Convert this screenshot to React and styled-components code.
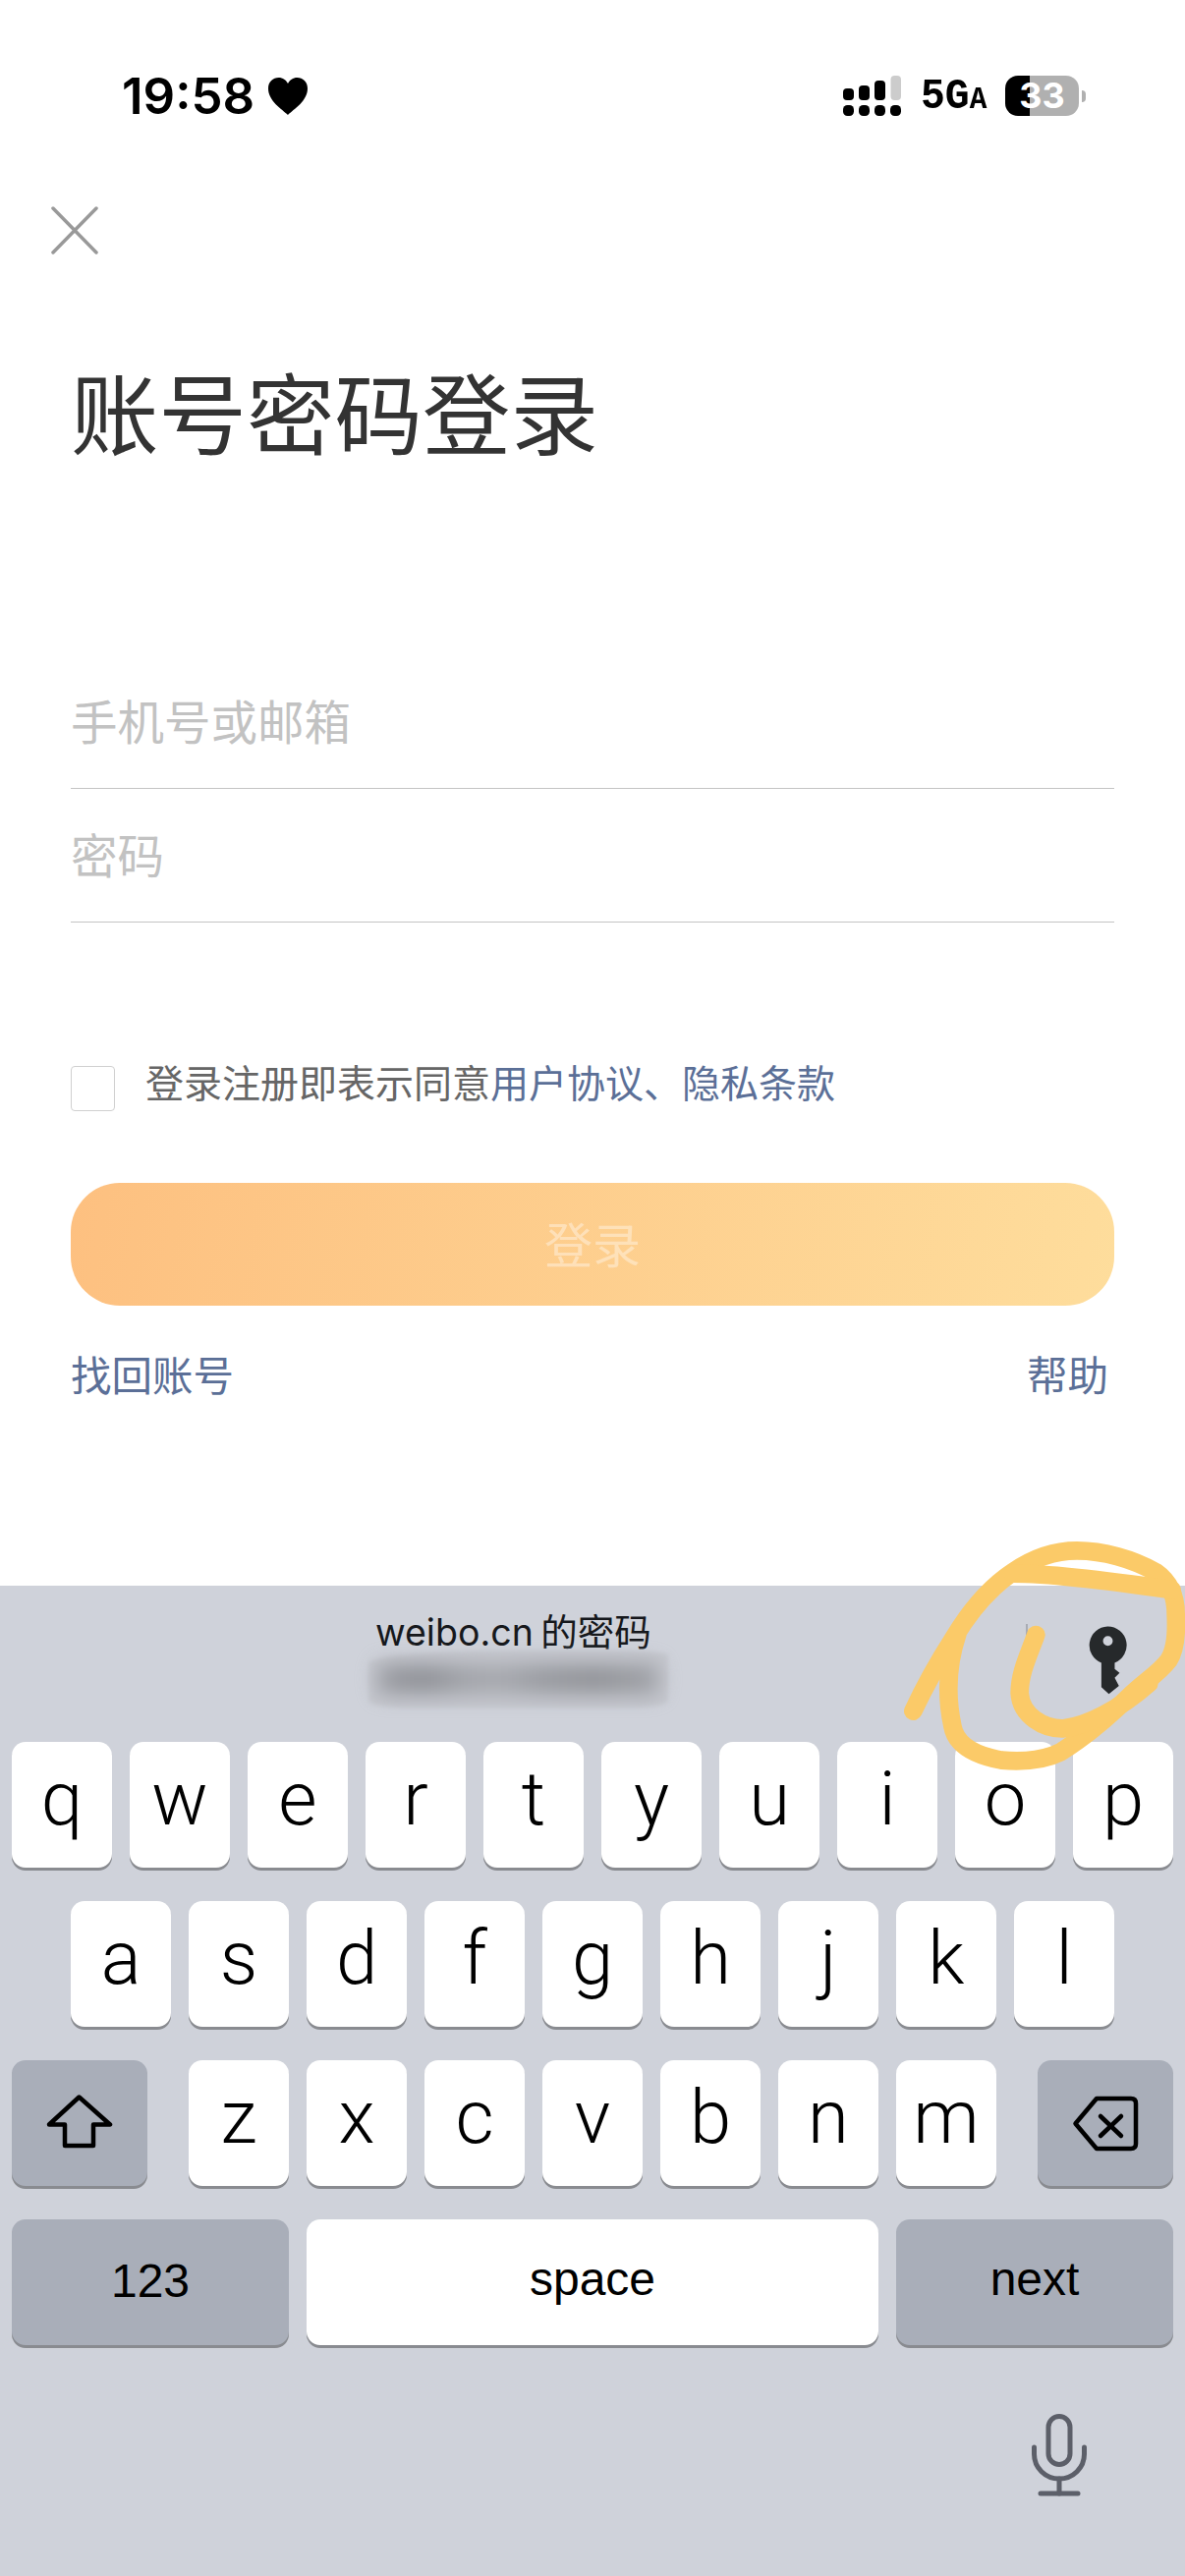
import React from "react";
import styled, { createGlobalStyle } from "styled-components";

const GlobalStyle = createGlobalStyle`
  html, body {
    margin: 0;
    padding: 0;
    background: #fff;
  }
  * {
    box-sizing: border-box;
  }
`;

const CJK = `Inter, "Noto Sans CJK SC", sans-serif`;
const KEY_FONT = `Roboto, "Liberation Sans", sans-serif`;
const LABEL_FONT = `"Liberation Sans", Arial, sans-serif`;

const Page = styled.div`
  position: relative;
  width: 1206px;
  height: 2622px;
  overflow: hidden;
  display: flex;
  flex-direction: column;
  background: #fff;
  font-family: ${CJK};
`;

/* status bar */
const StatusBar = styled.div`
  display: flex;
  justify-content: space-between;
  align-items: center;
  height: 41px;
  margin-top: 77px;
  padding: 0 101px 0 124px;
`;

const Clock = styled.div`
  display: flex;
  align-items: center;
  gap: 14px;
  font-size: 51px;
  font-weight: 600;
  line-height: 41px;
  color: #000;
`;

const StatusRight = styled.div`
  display: flex;
  align-items: center;
`;

const NetworkLabel = styled.div`
  margin-left: 20px;
  width: 86px;
  padding-top: 5px;
  font-family: "Liberation Mono", monospace;
  font-size: 45px;
  font-weight: 700;
  line-height: 41px;
  white-space: nowrap;
  color: #000;
  transform: scaleX(0.92);
  transform-origin: left center;

  small {
    font-size: 32px;
  }
`;

const Battery = styled.div`
  width: 75px;
  height: 41px;
  border-radius: 13px;
  display: flex;
  align-items: center;
  justify-content: center;
  background: linear-gradient(90deg, #000 33%, #b0b0b0 33%);
  color: #fff;
  font-size: 36px;
  font-weight: 700;
  line-height: 41px;
`;

const BatteryCap = styled.div`
  width: 4px;
  height: 12px;
  margin-left: 3px;
  border-radius: 0 6px 6px 0;
  background: #b0b0b0;
`;

/* login form */
const CloseButton = styled.button`
  width: 48px;
  height: 49px;
  margin: 92px 0 0 52px;
  padding: 0;
  border: 0;
  background: none;
  display: block;
`;

const Form = styled.div`
  padding: 0 72px;
`;

const Title = styled.h1`
  margin: 120px 0 198px;
  font-size: 89.500px;
  font-weight: 400;
  line-height: 90px;
  color: #333;
`;

const Field = styled.div`
  display: flex;
  align-items: center;
  height: 136px;
  padding-bottom: 4px;
  border-bottom: 1.5px solid #c4c4c4;
  font-size: 47.500px;
  color: #c2c2c2;
`;

const Agreement = styled.div`
  display: flex;
  align-items: flex-start;
  gap: 31px;
  margin-top: 142px;
  font-size: 39px;
  line-height: 44px;
  color: #666;
`;

const Checkbox = styled.div`
  width: 45px;
  height: 46px;
  margin-top: 4px;
  border: 1.5px solid #d0d0d0;
  border-radius: 4px;
`;

const LinkText = styled.span`
  color: #5b6f97;
`;

const LoginButton = styled.button`
  display: flex;
  align-items: center;
  justify-content: center;
  width: 100%;
  height: 125px;
  margin-top: 73px;
  padding: 0 0 4px;
  border: 0;
  border-radius: 50px;
  background: linear-gradient(100deg, #fdc080, #fedd9c);
  font-family: ${CJK};
  font-size: 49px;
  color: rgba(255, 255, 255, 0.38);
`;

const FooterLinks = styled.div`
  display: flex;
  justify-content: space-between;
  margin-top: 47px;
  padding-right: 6px;
  font-size: 41.500px;
  line-height: 50px;
  color: #5b6f97;
`;

/* keyboard */
const Keyboard = styled.div`
  margin-top: auto;
  height: 1008px;
  background: #cfd2da;
`;

const SuggestBar = styled.div`
  display: flex;
  justify-content: space-between;
  height: 159px;
  padding: 29px 57px 0 382px;
`;

const Credential = styled.div`
  width: 290px;
`;

const CredentialTitle = styled.div`
  font-size: 37.500px;
  line-height: 37px;
  word-spacing: -3px;
  white-space: nowrap;
  color: #16181c;
`;

const Smudge = styled.div`
  width: 305px;
  height: 58px;
  margin-left: -7px;
  padding: 14px 10px;
  border-radius: 50% 20% 12% 12% / 22% 8% 12% 12%;
  background: #c5c7ce;
  filter: blur(2px);
`;

const SmudgeBar = styled.div`
  height: 30px;
  background: linear-gradient(
    90deg,
    #9d9fa5 0%,
    #8f9197 16%,
    #a3a5ab 32%,
    #a6a8ae 44%,
    #989aa0 60%,
    #929499 78%,
    #a0a2a8 100%
  );
  filter: blur(10px);
`;

const KeySlot = styled.div`
  display: flex;
  align-items: flex-start;
  gap: 60px;
  padding-top: 10px;
`;

const SlotDivider = styled.div`
  width: 2px;
  height: 15px;
  background: #a9acb4;
`;

const Rows = styled.div`
  display: flex;
  flex-direction: column;
  gap: 34px;
`;

const Row = styled.div`
  display: flex;
  gap: 18px;
  padding: 0 ${(p) => p.$inset}px;
`;

const Key = styled.div`
  display: flex;
  align-items: center;
  justify-content: center;
  flex: 0 0 ${(p) => p.$width || 102}px;
  height: 128px;
  margin: 0 ${(p) => p.$gapRight || 0}px 0 ${(p) => p.$gapLeft || 0}px;
  padding-bottom: ${(p) => p.$lift ?? 12}px;
  border-radius: 14px;
  box-shadow: 0 3px 0 #898b90;
  background: ${(p) => (p.$dark ? "#a9aeb9" : "#fff")};
  font-family: ${(p) => (p.$small ? LABEL_FONT : KEY_FONT)};
  font-size: ${(p) => (p.$small ? 48 : 76)}px;
  font-weight: ${(p) => (p.$small ? 400 : 300)};
  line-height: 1;
  color: #000;
`;

const MicRow = styled.div`
  display: flex;
  justify-content: flex-end;
  margin-top: 68px;
  padding-right: 98px;
`;

/* hand-drawn circle over the key icon */
const Scribble = styled.svg`
  position: absolute;
  left: 906px;
  top: 1560px;
  width: 300px;
  height: 260px;
  pointer-events: none;
`;

const HeartIcon = () => (
  <svg width="40" height="38" viewBox="0 0 40 38">
    <path
      d="M20 38 C14 32 0 24 0 11 C0 4 5 0 10.500 0 C15 0 18 2.500 20 6 C22 2.500 25 0 29.500 0 C35 0 40 4 40 11 C40 24 26 32 20 38 Z"
      fill="#000"
    />
  </svg>
);

const SignalIcon = () => (
  <svg width="59" height="41" viewBox="0 0 59 41" fill="#000">
    <rect x="0" y="13" width="11" height="12" rx="4" />
    <rect x="16" y="10" width="11" height="15" rx="4" />
    <rect x="32" y="5" width="11" height="20" rx="4" />
    <rect x="48.500" y="0" width="10.500" height="25" rx="4" fill="#cccccc" />
    <rect x="0" y="30" width="11" height="11" rx="4.500" />
    <rect x="16" y="30" width="11" height="11" rx="4.500" />
    <rect x="32" y="30" width="11" height="11" rx="4.500" />
    <rect x="48" y="30" width="11" height="11" rx="4.500" />
  </svg>
);

const CloseIcon = () => (
  <svg width="48" height="49" viewBox="0 0 48 49" fill="none" stroke="#999" strokeWidth="3.500" strokeLinecap="round">
    <path d="M2 2 L46 47" />
    <path d="M46 2 L2 47" />
  </svg>
);

const KeyIcon = () => (
  <svg width="43" height="73" viewBox="600 280 130 220">
    <path
      fillRule="evenodd"
      fill="#26292b"
      d="M664 287 A58 58 0 0 1 686 399 L686 418 L701 430 L686 445 L699 470 L668 495 L645 474 L645 399 A58 58 0 0 1 664 287 Z M665 317 A15 15 0 1 0 665 347 A15 15 0 1 0 665 317 Z"
    />
  </svg>
);

const ShiftIcon = () => (
  <svg width="68" height="60" viewBox="0 0 68 60" fill="none" stroke="#000" strokeWidth="4.500" strokeLinejoin="round">
    <path d="M33.500 3.500 L65 31.500 L48 31.500 L48 53 L19 53 L19 31.500 L3 31.500 Z" />
  </svg>
);

const BackspaceIcon = () => (
  <svg width="72" height="60" viewBox="0 0 72 60" fill="none" stroke="#000" strokeWidth="4.500" strokeLinejoin="round" strokeLinecap="round">
    <path d="M5.500 30.500 L27 5 L62 5 Q67 5 67 10 L67 51 Q67 56 62 56 L27 56 Z" />
    <path d="M31 23 L52 43" />
    <path d="M52 23 L31 43" />
  </svg>
);

const MicIcon = () => (
  <svg width="60" height="88" viewBox="0 0 60 88" fill="none" stroke="#5c5f69" strokeWidth="5" strokeLinecap="round">
    <rect x="19" y="4.500" width="22" height="49" rx="11" />
    <path d="M4.500 36 L4.500 43 A25.500 25 0 0 0 55.500 43 L55.500 36" />
    <path d="M30 68 L30 83" />
    <path d="M11 83 L49 83" />
  </svg>
);

const topRow = ["q", "w", "e", "r", "t", "y", "u", "i", "o", "p"];
const middleRow = ["a", "s", "d", "f", "g", "h", "j", "k", "l"];
const bottomRow = ["z", "x", "c", "v", "b", "n", "m"];

export default function App() {
  return (
    <Page>
      <GlobalStyle />
      <StatusBar>
        <Clock>
          19:58
          <HeartIcon />
        </Clock>
        <StatusRight>
          <SignalIcon />
          <NetworkLabel>
            5G<small>A</small>
          </NetworkLabel>
          <Battery>33</Battery>
          <BatteryCap />
        </StatusRight>
      </StatusBar>

      <CloseButton>
        <CloseIcon />
      </CloseButton>

      <Form>
        <Title>账号密码登录</Title>
        <Field>手机号或邮箱</Field>
        <Field>密码</Field>
        <Agreement>
          <Checkbox />
          <div>
            登录注册即表示同意<LinkText>用户协议、隐私条款</LinkText>
          </div>
        </Agreement>
        <LoginButton>登录</LoginButton>
        <FooterLinks>
          <span>找回账号</span>
          <span>帮助</span>
        </FooterLinks>
      </Form>

      <Keyboard>
        <SuggestBar>
          <Credential>
            <CredentialTitle>weibo.cn 的密码</CredentialTitle>
            <Smudge>
              <SmudgeBar />
            </Smudge>
          </Credential>
          <KeySlot>
            <SlotDivider />
            <KeyIcon />
          </KeySlot>
        </SuggestBar>

        <Rows>
          <Row $inset={12}>
            {topRow.map((letter) => (
              <Key key={letter}>{letter}</Key>
            ))}
          </Row>
          <Row $inset={72}>
            {middleRow.map((letter) => (
              <Key key={letter}>{letter}</Key>
            ))}
          </Row>
          <Row $inset={12}>
            <Key $dark $width={138} $gapRight={24} $lift={0}>
              <ShiftIcon />
            </Key>
            {bottomRow.map((letter) => (
              <Key key={letter}>{letter}</Key>
            ))}
            <Key $dark $width={138} $gapLeft={24} $lift={0}>
              <BackspaceIcon />
            </Key>
          </Row>
          <Row $inset={12}>
            <Key $dark $small $width={282} $lift={2}>
              123
            </Key>
            <Key $small $width={582} $lift={6}>
              space
            </Key>
            <Key $dark $small $width={282} $lift={6}>
              next
            </Key>
          </Row>
        </Rows>

        <MicRow>
          <MicIcon />
        </MicRow>
      </Keyboard>

      <Scribble viewBox="0 0 900 780" fill="none" stroke="#fbca68" strokeWidth="56" strokeLinecap="round" strokeLinejoin="round">
        <path d="M70 545 C105 470 150 390 195 320 C240 245 300 170 375 120 C440 75 500 55 570 55 C650 55 740 80 810 120 C860 155 872 200 872 250 C875 310 870 360 850 390 C820 430 770 460 730 500 C680 550 600 620 520 670 C470 695 400 700 340 695 C260 680 200 650 190 590 C175 520 175 450 185 390 C190 360 195 340 205 310" />
        <path d="M375 125 C480 125 620 140 860 175" />
        <path d="M445 312 C420 380 395 430 395 490 C400 560 470 600 530 598 C600 590 700 540 790 460" />
      </Scribble>
    </Page>
  );
}
